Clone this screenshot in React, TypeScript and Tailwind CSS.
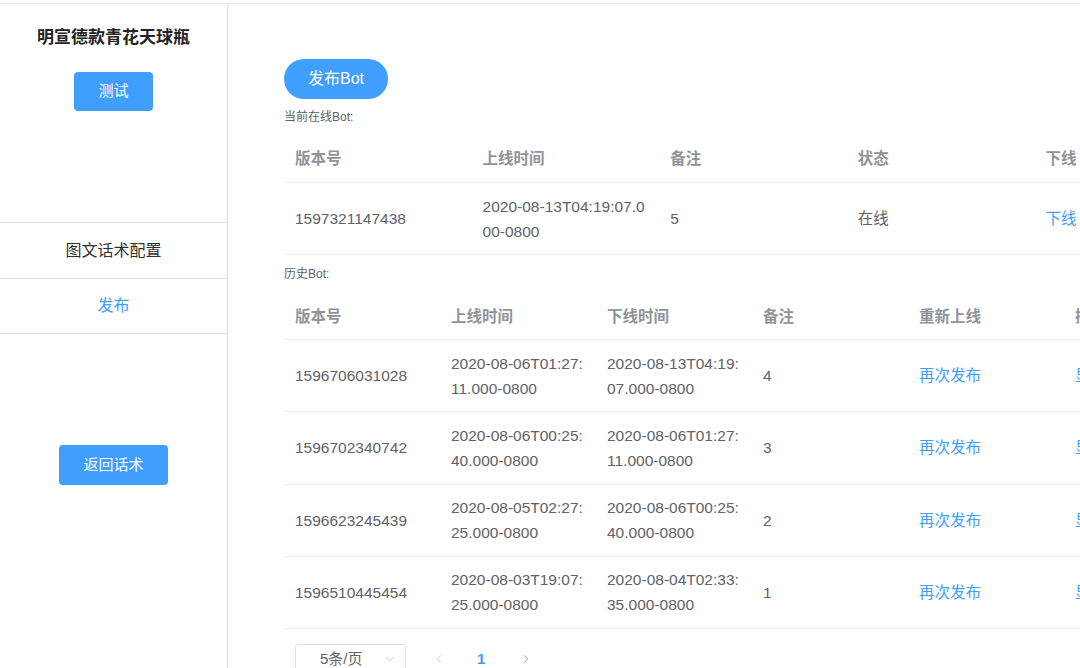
import { ChevronDown, ChevronLeft, ChevronRight } from 'lucide-react';

const current = [
  { id: '1597321147438', online: ['2020-08-13T04:19:07.0', '00-0800'], note: '5', status: '在线' },
];

const history = [
  { id: '1596706031028', online: ['2020-08-06T01:27:', '11.000-0800'], offline: ['2020-08-13T04:19:', '07.000-0800'], note: '4' },
  { id: '1596702340742', online: ['2020-08-06T00:25:', '40.000-0800'], offline: ['2020-08-06T01:27:', '11.000-0800'], note: '3' },
  { id: '1596623245439', online: ['2020-08-05T02:27:', '25.000-0800'], offline: ['2020-08-06T00:25:', '40.000-0800'], note: '2' },
  { id: '1596510445454', online: ['2020-08-03T19:07:', '25.000-0800'], offline: ['2020-08-04T02:33:', '35.000-0800'], note: '1' },
];

function Sidebar() {
  return (
    <aside className="w-[228px] shrink-0 border-r border-[#dcdfe6] flex flex-col">
      <div className="h-[218px] flex flex-col items-center">
        <h2 className="mt-[21px] text-[17px] font-bold text-[#222] leading-[26px]">明宣德款青花天球瓶</h2>
        <button className="mt-[21px] w-[79px] h-[39px] rounded-[4px] bg-[#409eff] text-white text-[15px]">测试</button>
      </div>
      <div className="border-t border-[#dcdfe6] h-[56px] flex items-center justify-center text-[16px] text-[#303133]">图文话术配置</div>
      <div className="border-t border-b border-[#dcdfe6] h-[56px] flex items-center justify-center text-[16px] text-[#409eff]">发布</div>
      <div className="flex justify-center mt-[111px]">
        <button className="w-[109px] h-[40px] rounded-[4px] bg-[#409eff] text-white text-[15px]">返回话术</button>
      </div>
    </aside>
  );
}

function Cell({ lines }: { lines: string[] }) {
  return (
    <div className="leading-[25px]">
      {lines.map((l, i) => (
        <div key={i}>{l}</div>
      ))}
    </div>
  );
}

export default function App() {
  return (
    <div
      className="w-[1080px] h-[668px] overflow-hidden bg-white flex flex-col"
      style={{ fontFamily: '"Liberation Sans", Arial, "Noto Sans CJK SC", sans-serif' }}
    >
      <div className="h-[3px] shrink-0" />
      <div className="flex flex-1 border-t border-[#e8e8e8] min-h-0">
        <Sidebar />
        <main className="flex-1 min-w-0 overflow-hidden pl-[56px] pt-[55px]">
          <button className="w-[104px] h-[40px] rounded-full bg-[#409eff] text-white text-[16px]">发布Bot</button>
          <div className="mt-[9px] text-[12px] text-[#606266] leading-[18px]">当前在线Bot:</div>

          <div className="w-[938px] mt-[9px] text-[15.5px] text-[#606266]">
            <div className="grid grid-cols-5 h-[48px] items-center border-b border-[#ebeef5] font-bold text-[#909399]">
              <div className="pl-[11px]">版本号</div>
              <div className="pl-[11px]">上线时间</div>
              <div className="pl-[11px]">备注</div>
              <div className="pl-[11px]">状态</div>
              <div className="pl-[11px]">下线</div>
            </div>
            {current.map((r) => (
              <div key={r.id} className="grid grid-cols-5 h-[72px] items-center border-b border-[#ebeef5]">
                <div className="pl-[11px]">{r.id}</div>
                <div className="pl-[11px]"><Cell lines={r.online} /></div>
                <div className="pl-[11px]">{r.note}</div>
                <div className="pl-[11px]">{r.status}</div>
                <div className="pl-[11px] text-[#409eff]">下线</div>
              </div>
            ))}
          </div>

          <div className="mt-[10px] text-[12px] text-[#606266] leading-[18px]">历史Bot:</div>

          <div className="w-[936px] mt-[11px] text-[15.5px] text-[#606266]">
            <div className="grid grid-cols-6 h-[46px] items-center border-b border-[#ebeef5] font-bold text-[#909399]">
              <div className="pl-[11px]">版本号</div>
              <div className="pl-[11px]">上线时间</div>
              <div className="pl-[11px]">下线时间</div>
              <div className="pl-[11px]">备注</div>
              <div className="pl-[11px]">重新上线</div>
              <div className="pl-[11px] whitespace-nowrap">操作</div>
            </div>
            {history.map((r) => (
              <div key={r.id} className="grid grid-cols-6 h-[72.25px] items-center border-b border-[#ebeef5]">
                <div className="pl-[11px]">{r.id}</div>
                <div className="pl-[11px]"><Cell lines={r.online} /></div>
                <div className="pl-[11px]"><Cell lines={r.offline} /></div>
                <div className="pl-[11px]">{r.note}</div>
                <div className="pl-[11px] text-[#409eff]">再次发布</div>
                <div className="pl-[11px] text-[#409eff] whitespace-nowrap">显示</div>
              </div>
            ))}
          </div>

          <div className="flex items-center mt-[15px] text-[15px] text-[#606266]">
            <div className="ml-[11px] w-[111px] h-[30px] border border-[#dcdfe6] rounded-[3px] flex items-center justify-between pl-[24px] pr-[8px]">
              <span>5条/页</span>
              <ChevronDown className="w-[14px] h-[14px] text-[#c0c4cc]" strokeWidth={1.5} />
            </div>
            <ChevronLeft className="ml-[26px] w-[14px] h-[14px] text-[#c0c4cc]" strokeWidth={1.5} />
            <span className="ml-[31px] text-[#409eff] font-bold">1</span>
            <ChevronRight className="ml-[34px] w-[14px] h-[14px] text-[#909399]" strokeWidth={1.5} />
          </div>
        </main>
      </div>
    </div>
  );
}
